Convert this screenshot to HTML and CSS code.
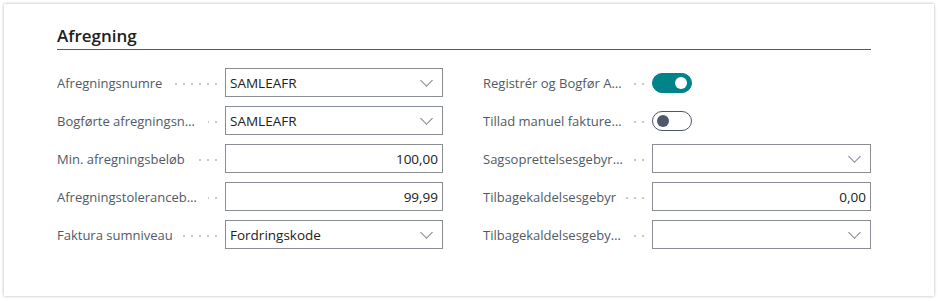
FILE: index.html
```html
<!DOCTYPE html>
<html lang="da">
<head>
    <meta charset="UTF-8">
    <meta name="viewport" content="width=device-width, initial-scale=1.0">
    <title>Afregning</title>
    <link rel="stylesheet" href="styles.css">
</head>
<body>
    <div class="card">
        <h2 class="groupTitle">Afregning</h2>

        <div class="columns">
            <div class="column">
                <div class="field">
                    <div class="label"><span>Afregningsnumre</span></div>
                    <div class="box select"><span class="value">SAMLEAFR</span><span class="chevron"></span></div>
                </div>
                <div class="field">
                    <div class="label"><span>Bogførte afregningsnumre</span></div>
                    <div class="box select"><span class="value">SAMLEAFR</span><span class="chevron"></span></div>
                </div>
                <div class="field">
                    <div class="label"><span>Min. afregningsbeløb</span></div>
                    <div class="box number"><span class="value">100,00</span></div>
                </div>
                <div class="field">
                    <div class="label"><span>Afregningstolerancebeløb</span></div>
                    <div class="box number"><span class="value">99,99</span></div>
                </div>
                <div class="field">
                    <div class="label"><span>Faktura sumniveau</span></div>
                    <div class="box select"><span class="value">Fordringskode</span><span class="chevron"></span></div>
                </div>
            </div>

            <div class="column">
                <div class="field">
                    <div class="label"><span>Registrér og Bogfør Afregning</span></div>
                    <div class="toggleCell"><span class="toggle on"></span></div>
                </div>
                <div class="field">
                    <div class="label"><span>Tillad manuel fakturering</span></div>
                    <div class="toggleCell"><span class="toggle"></span></div>
                </div>
                <div class="field">
                    <div class="label"><span>Sagsoprettelsesgebyr (kode)</span></div>
                    <div class="box select"><span class="value"></span><span class="chevron"></span></div>
                </div>
                <div class="field">
                    <div class="label"><span>Tilbagekaldelsesgebyr</span></div>
                    <div class="box number"><span class="value">0,00</span></div>
                </div>
                <div class="field">
                    <div class="label"><span>Tilbagekaldelsesgebyr (kode)</span></div>
                    <div class="box select"><span class="value"></span><span class="chevron"></span></div>
                </div>
            </div>
        </div>
    </div>
</body>
</html>
```

FILE: styles.css
```css
body {
    margin: 0;
    padding: 4px;
    background-color: #ffffff;
    font-family: 'Open Sans', 'Noto Sans', sans-serif;
    font-size: 13px;
    color: #212121;
}

.card {
    width: 930px;
    height: 292px;
    box-sizing: border-box;
    padding: 20px 63px 0 53px;
    background-color: #ffffff;
    box-shadow: 0 0 3px rgba(0, 0, 0, 0.3);
}

.groupTitle {
    margin: 0;
    font-size: 17px;
    font-weight: 600;
    line-height: 24px;
    color: #212121;
    padding-bottom: 1px;
    border-bottom: 1px solid #505a66;
}

.columns {
    display: grid;
    grid-template-columns: 386px 388px;
    column-gap: 40px;
    margin-top: 18px;
}

.column {
    display: flex;
    flex-direction: column;
    gap: 9px;
}

.field {
    display: grid;
    grid-template-columns: 163px 1fr;
    column-gap: 5px;
    height: 29px;
}

.column + .column .field {
    grid-template-columns: 164px 1fr;
}

/* label med prikket ledelinje til højre */
.label {
    display: flex;
    align-items: center;
    min-width: 0;
    padding-right: 2px;
    background-image: radial-gradient(circle, #c8c8c8 0.7px, transparent 1px);
    background-size: 8px 2px;
    background-repeat: repeat-x;
    background-position: right 0 top 15px;
}

.label span {
    background-color: #ffffff;
    color: #505a66;
    white-space: nowrap;
    overflow: hidden;
    text-overflow: ellipsis;
    max-width: 141px;
    padding-right: 10px;
}

.box {
    display: flex;
    align-items: center;
    border: 1px solid #8a8d94;
    box-sizing: border-box;
    height: 29px;
    padding: 0 4px 0 4px;
    font-size: 13.5px;
    color: #212121;
}

.box .value {
    flex: 1;
    white-space: nowrap;
}

.number .value {
    text-align: right;
}

.chevron {
    width: 8px;
    height: 8px;
    border-right: 1px solid #7d818a;
    border-bottom: 1px solid #7d818a;
    transform: rotate(45deg);
    margin: 0 7px 5px 0;
}

.toggleCell {
    display: flex;
    align-items: center;
}

.toggle {
    position: relative;
    width: 40px;
    height: 20px;
    box-sizing: border-box;
    border-radius: 10px;
    border: 1px solid #4d5566;
    background-color: #ffffff;
}

.toggle::after {
    content: '';
    position: absolute;
    top: 3px;
    left: 4px;
    width: 12px;
    height: 12px;
    border-radius: 50%;
    background-color: #4f586b;
}

.toggle.on {
    background-color: #008489;
    border-color: #008489;
}

.toggle.on::after {
    left: auto;
    right: 4px;
    background-color: #ffffff;
}
```
